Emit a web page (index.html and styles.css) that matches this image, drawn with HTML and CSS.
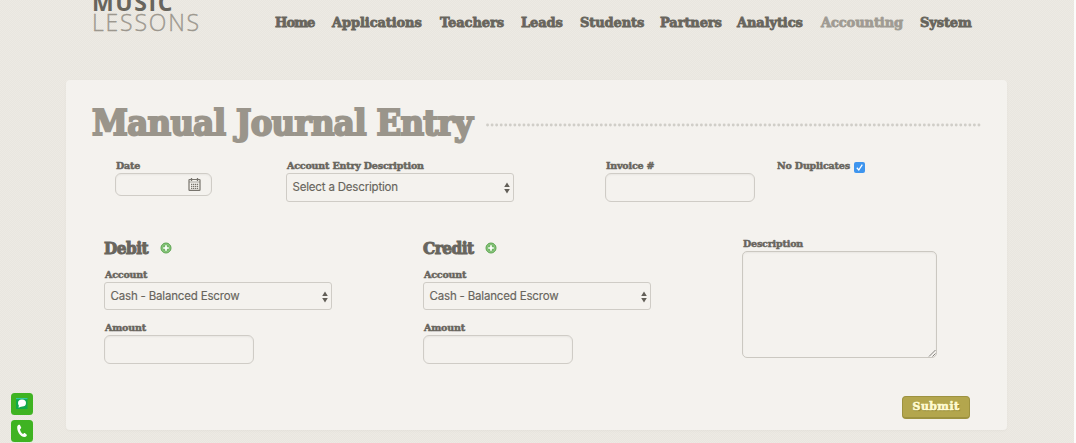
FILE: index.html
```
<!DOCTYPE html>
<html lang="en">
<head>
<meta charset="utf-8">
<title>Manual Journal Entry</title>
<link rel="stylesheet" href="styles.css">
</head>
<body>
<div class="page">
  <header class="header">
    <div class="logo"><span class="logo-top">MUSIC</span><span class="logo-bottom">LESSONS</span></div>
    <nav class="nav">
      <a class="w-home">Home</a><a class="w-applications">Applications</a><a class="w-teachers">Teachers</a><a class="w-leads">Leads</a><a class="w-students">Students</a><a class="w-partners">Partners</a><a class="w-analytics">Analytics</a><a class="w-accounting active">Accounting</a><a class="w-system">System</a>
    </nav>
  </header>
  <main class="panel">
    <div class="title-row"><h1>Manual Journal Entry</h1><svg class="dots" width="496" height="4"><line x1="1.5" y1="2" x2="495" y2="2" stroke="#d0cec8" stroke-width="2.8" stroke-linecap="round" stroke-dasharray="0.1 4.45"/></svg></div>
    <div class="row-top">
      <div class="field"><label class="l-date">Date</label>
        <div class="input date"><svg width="13" height="13" viewBox="0 0 13 13" fill="none" stroke="#77746d"><rect x="1" y="1.5" width="11" height="10.8" rx=".6" stroke-width="1.2"/><path d="M1 4h11" stroke-width=".6"/><path d="M3.5 0v3M9.5 0v3" stroke-width="1.3"/><path d="M3 6.4h7.2M3 8.4h7.2M3 10.4h7.2" stroke-width="1.3" stroke-dasharray="1.3 .65"/></svg></div></div>
      <div class="field"><label class="l-entry">Account Entry Description</label>
        <div class="select tall"><span class="t-select">Select a Description</span><svg width="6" height="12"><path d="M3 0.5L5.8 5H.2zM3 11.5L5.8 7H.2z" fill="#625f58"/></svg></div></div>
      <div class="field"><label class="l-invoice">Invoice #</label><div class="input"></div></div>
      <div class="check"><label class="l-dup">No Duplicates</label><svg width="11" height="11" viewBox="0 0 11 11"><rect width="11" height="11" rx="2" fill="#3e95ee"/><path d="M2.8 5.8l2 2.2 3.5-5.4" fill="none" stroke="#fff" stroke-width="1.3"/></svg></div>
    </div>
    <div class="row-main">
      <section>
        <div class="head"><h2 class="w-debit">Debit</h2><svg width="12" height="12" viewBox="0 0 12 12"><circle cx="6" cy="6" r="5" fill="#73b766" stroke="#5da651" /><circle cx="6" cy="6" r="4" fill="none" stroke="#9bcf8f" stroke-width=".6"/><path d="M6 3.2v5.6M3.2 6h5.6" stroke="#fff" stroke-width="1.7"/></svg></div>
        <label class="l-account">Account</label>
        <div class="select"><span class="t-cash">Cash - Balanced Escrow</span><svg width="6" height="12"><path d="M3 0.5L5.8 5H.2zM3 11.5L5.8 7H.2z" fill="#625f58"/></svg></div>
        <label class="l-amount">Amount</label><div class="input"></div>
      </section>
      <section>
        <div class="head"><h2 class="w-credit">Credit</h2><svg width="12" height="12" viewBox="0 0 12 12"><circle cx="6" cy="6" r="5" fill="#73b766" stroke="#5da651" /><circle cx="6" cy="6" r="4" fill="none" stroke="#9bcf8f" stroke-width=".6"/><path d="M6 3.2v5.6M3.2 6h5.6" stroke="#fff" stroke-width="1.7"/></svg></div>
        <label class="l-account">Account</label>
        <div class="select"><span class="t-cash">Cash - Balanced Escrow</span><svg width="6" height="12"><path d="M3 0.5L5.8 5H.2zM3 11.5L5.8 7H.2z" fill="#625f58"/></svg></div>
        <label class="l-amount">Amount</label><div class="input"></div>
      </section>
      <section class="desc"><label class="l-desc">Description</label><div class="textarea"><svg width="8" height="8"><path d="M1 7.5L7.5 1M4.5 7.5l3-3" stroke="#77756f" stroke-width=".9"/></svg></div></section>
    </div>
    <div class="actions"><button class="submit">Submit</button></div>
  </main>
  <aside class="contact">
    <svg width="22" height="22" viewBox="0 0 22 22"><rect width="22" height="22" rx="3.5" fill="#3fb322"/><rect x="5" y="5" width="11.5" height="11" fill="#10a94b"/><path d="M5 5h11.5v1.2H5z" fill="#33c7a0"/><ellipse cx="11" cy="10" rx="4" ry="3.5" fill="#fff"/><path d="M8 12l-.5 2.8 4-1.8z" fill="#fff"/></svg>
    <svg width="22" height="22" viewBox="0 0 22 22"><rect width="22" height="22" rx="3.5" fill="#3fb322"/><path d="M6.3 6.2C6.6 5 8 4.4 8.8 4.8l1.4 2.8c.2.5-.9 1.4-1.2 1.8.2 1.8 1.4 3.6 3 4.5.5-.3 1.2-1.2 1.8-.9l2 1.8c.4.7-.9 2.2-2.1 2.3C9 17.1 5.5 10.5 6.3 6.2z" fill="#fff"/></svg>
  </aside>
</div>
</body>
</html>
```
FILE: styles.css
```
* { box-sizing: border-box; }
html { background: #fbfbfa; }
body { margin: 0; overflow: hidden; }
.page {
  width: 1074px; height: 443px; overflow: hidden; position: relative;
  background: repeating-conic-gradient(#e9e6df 0% 25%, #edeae4 0% 50%) 0 0 / 2px 2px;
  color: #68655d;
  font-family: "DejaVu Serif", serif;
}
.header { height: 80px; display: flex; padding-left: 92px; }
.logo { width: 183px; display: flex; flex-direction: column; margin-top: -8px; }
.logo-top { font: 700 23px/20px "Open Sans", sans-serif; letter-spacing: 1.6px; }
.logo-bottom { font: 300 23px/20px "Open Sans", sans-serif; letter-spacing: 1.8px; color: #9c978e; -webkit-text-stroke: .3px; }
.nav { display: flex; padding-top: 12px; }
.nav a { font-weight: 700; font-size: 13px; line-height: 21px; white-space: nowrap; letter-spacing: -.1px; -webkit-text-stroke: .8px; }
.nav .active { color: #a09b93; }
.w-home { width: 57px; } .w-applications { width: 108px; } .w-teachers { width: 81px; }
.w-leads { width: 59px; } .w-students { width: 80px; } .w-partners { width: 77px; }
.w-analytics { width: 84px; } .w-accounting { width: 99px; } .w-system { width: 60px; }
.nav .w-home { letter-spacing: -.9px; }
.panel { margin-left: 66px; width: 941px; height: 350px; background: #f4f2ee; border-radius: 4px; box-shadow: 0 1px 3px #00000008; }
.title-row { height: 86px; padding-left: 26px; display: flex; }
h1 { margin: 20px 0 0; width: 394px; font-family: "DejaVu Serif Condensed", "DejaVu Serif", serif; font-size: 36px; line-height: 45px; color: #9a958b; letter-spacing: -.65px; white-space: nowrap; -webkit-text-stroke: 2px; }
.dots { margin-top: 43px; }
.row-top { display: grid; grid-template-columns: 171px 319px 171px 100px; padding-left: 49px; height: 73px; margin-top: -7px; }
label { display: block; height: 14px; line-height: 14px; padding-left: 1px; font-size: 9.5px; font-weight: 700; white-space: nowrap; letter-spacing: -.17px; -webkit-text-stroke: .5px; }
.input { width: 150px; height: 29px; border: 1px solid #cfccc6; border-radius: 6px; box-shadow: inset 0 1px 2px #0000000d; }
.date { width: 97px; height: 23px; display: flex; justify-content: flex-end; padding: 4px 10px 0 0; }
.select { width: 228px; height: 28px; border: 1px solid #cfccc6; border-radius: 3px; display: flex; align-items: center; justify-content: space-between; padding: 0 3px 0 5.5px; font: 11.5px "Inter", sans-serif; letter-spacing: -.18px; white-space: nowrap; -webkit-text-stroke: .15px; }
.tall { height: 29px; padding-bottom: 1px; }
.select svg { margin-top: 2px; }
.check { display: flex; }
.check label { width: 78px; }
.check svg { margin-top: 3px; flex: none; }
.row-main { display: grid; grid-template-columns: 319px 319px 195px; padding-left: 38px; height: 148px; margin-top: 5px; }
.head { display: flex; height: 22px; align-items: center; margin-bottom: 9px; }
h2 { margin: 0; font-family: "DejaVu Serif Condensed", "DejaVu Serif", serif; font-size: 17px; line-height: 22px; letter-spacing: -.5px; -webkit-text-stroke: 1px; }
.w-debit { width: 56px; } .w-credit { width: 62px; }
.l-amount { margin-top: 11px; }
.textarea { width: 195px; height: 107px; border: 1px solid #cbc8c1; border-radius: 5px; box-shadow: inset 0 1px 2px #0000000d; display: flex; align-items: flex-end; justify-content: flex-end; }
.actions { display: flex; justify-content: flex-end; padding: 11px 37px 0 0; }
.submit { width: 68px; height: 23px; padding: 0 0 1px; border: 1px solid #9d9240; border-bottom-width: 2px; border-radius: 4px; background: #b3a64d; color: #fffbd0; font: 700 11px/19px "DejaVu Serif", serif; letter-spacing: .4px; -webkit-text-stroke: .6px; text-shadow: 1px 1px 1px #82782f; }
.contact { position: absolute; left: 11px; top: 393px; display: flex; flex-direction: column; gap: 5px; }
```
